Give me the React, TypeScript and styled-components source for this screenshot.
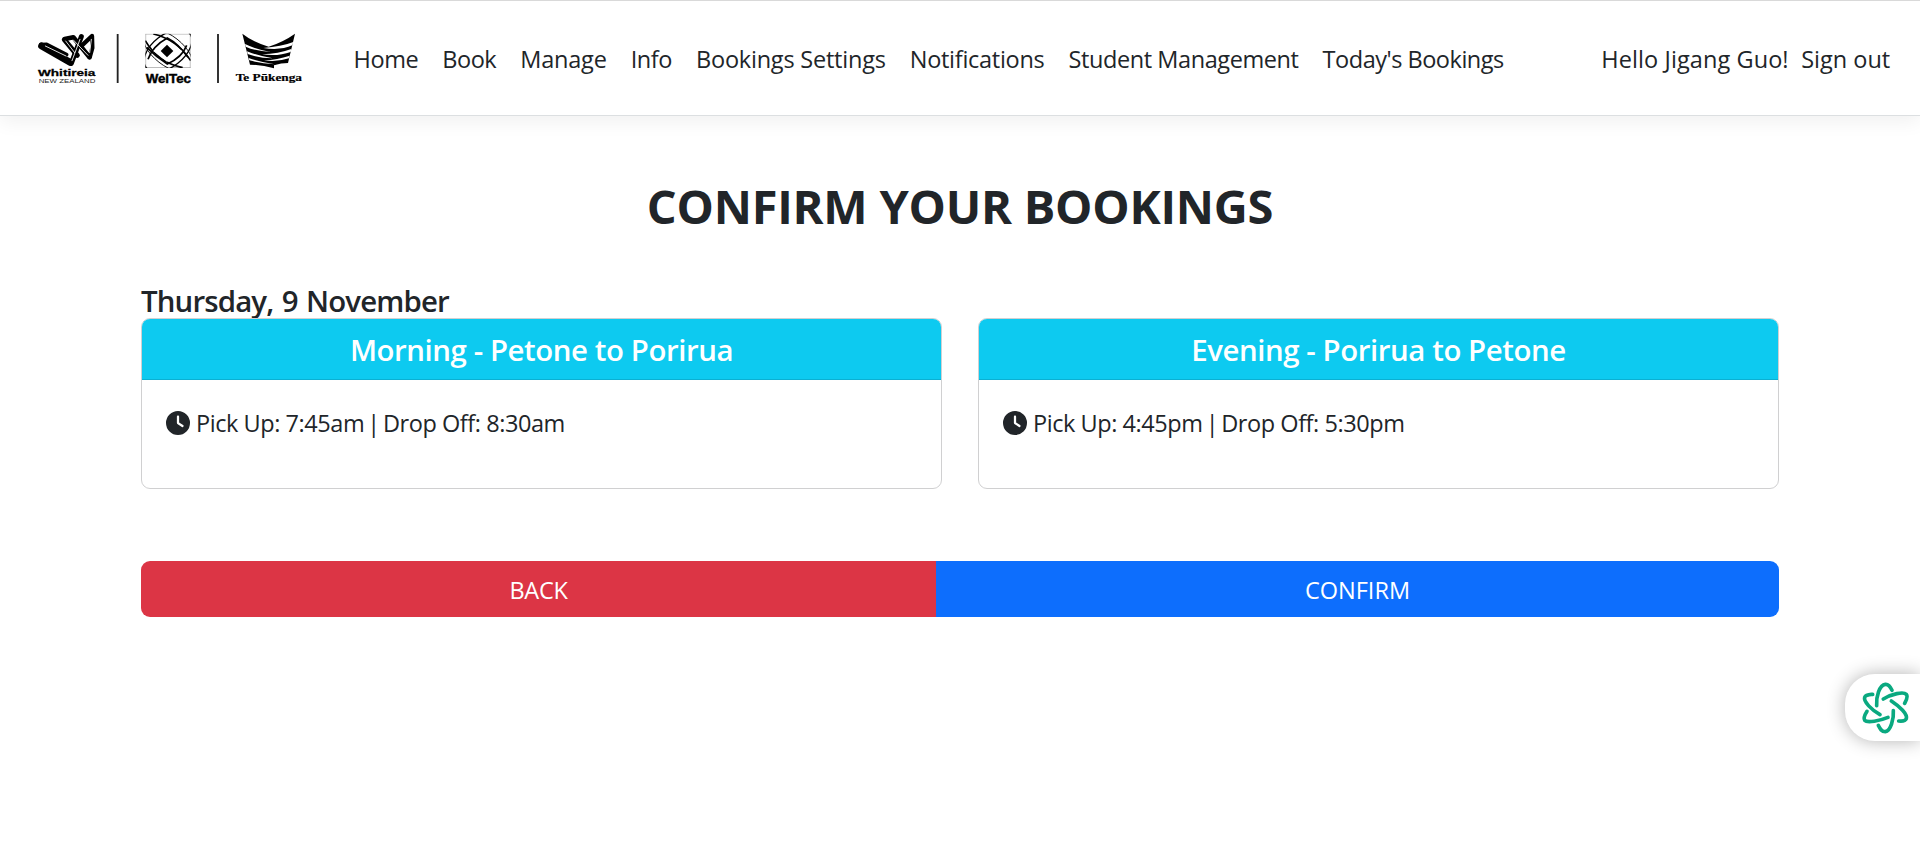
import React from "react";
import styled, { createGlobalStyle } from "styled-components";

const GlobalStyle = createGlobalStyle`
  *, *::before, *::after { box-sizing: border-box; }
  body {
    margin: 0;
    background: #fff;
    color: #212529;
    font-family: "Open Sans", "Noto Sans", sans-serif;
    font-size: 23.5px;
    line-height: 36px;
    overflow: hidden;
  }
  h1, h2, h3, p { margin: 0; }
`;

const Page = styled.div`
  position: relative;
  min-height: 845px;
  overflow: hidden;
`;

const Header = styled.header`
  display: flex;
  align-items: center;
  height: 116px;
  padding: 1px 29.8px 0 20px;
  border-top: 1px solid #d9d9d9;
  border-bottom: 1px solid #dcdfe1;
  box-shadow: 0 6px 18px rgba(0, 0, 0, 0.06);
`;

const Brand = styled.a`
  display: block;
  flex: none;
  width: 300px;
  height: 80px;
  margin-top: 2px;
  svg { display: block; }
`;

const Nav = styled.nav`
  display: flex;
  flex: 1;
  gap: 24.1px;
  margin-left: 33.6px;
`;

const Account = styled.div`
  display: flex;
  gap: 12.5px;
`;

const Label = styled.a<{ $spacing?: number }>`
  color: inherit;
  text-decoration: none;
  white-space: nowrap;
  letter-spacing: ${(p) => p.$spacing ?? 0}px;
`;

const Main = styled.main`
  width: 1638px;
  margin: 0 auto;
  padding-top: 61px;
`;

const Title = styled.h1`
  font-size: 47px;
  font-weight: 700;
  line-height: 58px;
  letter-spacing: -0.23px;
  text-align: center;
`;

const DateHeading = styled.h2`
  height: 36px;
  margin-top: 47px;
  padding-top: 1px;
  font-size: 29.4px;
  font-weight: 600;
  line-height: 36px;
  letter-spacing: -0.85px;
  word-spacing: 1.6px;
`;

const Cards = styled.div`
  display: grid;
  grid-template-columns: 1fr 1fr;
  gap: 36px;
`;

const Card = styled.section`
  border: 1px solid #d0d0d1;
  border-radius: 9px;
  overflow: hidden;
`;

const CardTitle = styled.h3`
  padding: 13px 24px 11px;
  border-bottom: 1px solid #0bb0d2;
  background: #0dcaf0;
  color: #fff;
  font-size: 29.4px;
  font-weight: 600;
  letter-spacing: -0.42px;
  text-align: center;
`;

const CardBody = styled.div`
  display: flex;
  align-items: flex-start;
  gap: 6px;
  height: 108px;
  padding: 25px 24px;
`;

const ClockIcon = styled.svg`
  flex: none;
  width: 24px;
  height: 24px;
  margin-top: 6px;
`;

const Separator = styled.span`
  margin: 0 -2.6px 0 -2.6px;
`;

const Actions = styled.div`
  display: flex;
  margin-top: 72px;
  border-radius: 9px;
  overflow: hidden;
`;

const ActionButton = styled.button<{ $color: string; $width: number; $spacing?: number }>`
  width: ${(p) => p.$width}px;
  height: 56px;
  padding: 11px 0 9px;
  border: 0;
  background: ${(p) => p.$color};
  color: #fff;
  font: inherit;
  letter-spacing: ${(p) => p.$spacing ?? 0}px;
`;

const Assistant = styled.button`
  position: absolute;
  top: 674px;
  right: 0;
  display: flex;
  align-items: center;
  width: 75px;
  height: 67px;
  padding: 0 0 0 15px;
  border: 0;
  border-radius: 30px 0 0 30px;
  background: #fff;
  box-shadow: 0 0 18px rgba(0, 0, 0, 0.3);
`;

const Logos = () => (
  <svg width="300" height="80" viewBox="0 0 900 240">
    {/* Whitireia */}
    <g strokeLinejoin="round" strokeLinecap="round" fill="none">
      <path d="M65 78L150 127" stroke="#000" strokeWidth="21" />
      <path d="M62 74L80 73L140 104" stroke="#000" strokeWidth="11" />
      <path d="M154 130L184 50" stroke="#000" strokeWidth="15" />
      <path d="M133 59L172 106" stroke="#000" strokeWidth="15" />
      <path d="M134 57L160 52L208 111" stroke="#000" strokeWidth="14" />
      <path d="M209 112L217 84L216 48L186 76" stroke="#000" strokeWidth="13" />
      <path d="M76 78L138 108M137 63L164 98M160 60L204 106M180 58L156 122M214 58L209 98" stroke="#fff" strokeWidth="2.6" />
    </g>
    <text x="54" y="168" textLength="172" lengthAdjust="spacingAndGlyphs" fontFamily="Liberation Sans, sans-serif" fontWeight="700" fontSize="29" stroke="#000" strokeWidth="0.8">Whitireia</text>
    <text x="56" y="188" textLength="170" lengthAdjust="spacingAndGlyphs" fontFamily="Liberation Sans, sans-serif" fontSize="18" fill="#222">NEW ZEALAND</text>
    <path d="M293 42V189M594 42V189" stroke="#222" strokeWidth="5.5" />
    {/* WelTec */}
    <clipPath id="weltec"><rect x="376" y="41" width="136" height="103" /></clipPath>
    <g clipPath="url(#weltec)" fill="none" stroke="#000">
      <path d="M376 42H512M376 143H512M377 41V144M511 41V144" stroke="#888" strokeWidth="2" />
      <ellipse cx="444" cy="92" rx="83" ry="48" transform="rotate(-38 444 92)" strokeWidth="4" />
      <ellipse cx="444" cy="92" rx="88" ry="44" transform="rotate(38 444 92)" strokeWidth="2.5" />
      <path d="M400 42Q470 58 512 122M376 62Q414 128 488 143" strokeWidth="5" />
      <path d="M384 118Q398 78 442 54Q474 70 504 112M380 82Q410 112 442 132Q486 112 500 76" strokeWidth="5" />
      <path d="M404 93Q422 82 441 64Q462 82 482 93Q462 104 441 122Q422 104 404 93Z" fill="#fff" stroke="#fff" strokeWidth="5" />
      <path d="M441 74L460 93L441 112L422 93Z" fill="#000" stroke="none" />
    </g>
    <text x="377" y="189" textLength="136" lengthAdjust="spacingAndGlyphs" fontFamily="Liberation Sans, sans-serif" fontWeight="700" fontSize="36" stroke="#000" strokeWidth="1.2">WelTec</text>
    {/* Te Pūkenga */}
    <path d="M667 41Q700 67 746 80Q790 66 825 41L804 129Q784 129 762 136L762 145Q728 134 690 134Z" fill="#000" />
    <g fill="#fff">
      <path d="M675 72Q708 88 752 96Q708 94 677 80Z" />
      <path d="M820 66Q784 80 730 84Q782 92 817 76Z" />
      <path d="M681 94Q716 108 758 115Q714 114 683 102Z" />
      <path d="M814 87Q776 101 726 103Q774 110 812 96Z" />
      <path d="M686 114Q722 126 764 133Q720 130 688 121Z" />
      <path d="M809 107Q772 119 732 121Q770 127 807 115Z" />
    </g>
    <text x="647" y="184" textLength="199" lengthAdjust="spacingAndGlyphs" fontFamily="Liberation Serif, serif" fontWeight="700" fontSize="31" stroke="#000" strokeWidth="0.6">Te Pūkenga</text>
  </svg>
);

const Clock = () => (
  <ClockIcon viewBox="0 0 512 512" fill="#212529">
    <path d="M256 0a256 256 0 1 1 0 512A256 256 0 1 1 256 0zM232 120V256c0 8 4 15.5 10.700 20l96 64c11 7.400 25.900 4.400 33.300-6.700s4.400-25.900-6.700-33.300L280 243.200V120c0-13.300-10.700-24-24-24s-24 10.700-24 24z" />
  </ClockIcon>
);

const Knot = () => (
  <svg width="50" height="56" viewBox="120 90 150 168" fill="none" stroke="#0aa980" strokeWidth="11" strokeLinecap="round">
    <path d="M170 167C168 140 178 105 196 103C206 102 212 112 216 121" />
    <path d="M190 147C215 132 250 124 259 133C265 141 258 153 254 160" />
    <path d="M214 153C240 170 263 193 259 206C256 214 246 214 236 213" />
    <path d="M220 182C222 205 212 243 196 245C184 245 180 236 175 226" />
    <path d="M204 202C180 212 142 220 134 211C130 205 136 192 141 184" />
    <path d="M180 194C155 180 130 155 134 142C137 134 148 134 158 133" />
  </svg>
);

const links = [
  { text: "Home", spacing: -0.45 },
  { text: "Book", spacing: -0.5 },
  { text: "Manage", spacing: -0.2 },
  { text: "Info", spacing: -0.45 },
  { text: "Bookings Settings", spacing: -0.22 },
  { text: "Notifications", spacing: -0.28 },
  { text: "Student Management", spacing: -0.42 },
  { text: "Today's Bookings", spacing: -0.48 },
];

const trips = [
  { title: "Morning - Petone to Porirua", pickUp: "7:45am", dropOff: "8:30am" },
  { title: "Evening - Porirua to Petone", pickUp: "4:45pm", dropOff: "5:30pm" },
];

export default function App() {
  return (
    <Page>
      <GlobalStyle />
      <Header>
        <Brand><Logos /></Brand>
        <Nav>
          {links.map((l) => <Label key={l.text} $spacing={l.spacing}>{l.text}</Label>)}
        </Nav>
        <Account>
          <Label $spacing={0.09}>Hello Jigang Guo!</Label>
          <Label>Sign out</Label>
        </Account>
      </Header>
      <Main>
        <Title>CONFIRM YOUR BOOKINGS</Title>
        <DateHeading>Thursday, 9 November</DateHeading>
        <Cards>
          {trips.map((t) => (
            <Card key={t.title}>
              <CardTitle>{t.title}</CardTitle>
              <CardBody>
                <Clock />
                <Label as="p" $spacing={-0.44}>
                  Pick Up: {t.pickUp} <Separator>|</Separator> Drop Off: {t.dropOff}
                </Label>
              </CardBody>
            </Card>
          ))}
        </Cards>
        <Actions>
          <ActionButton $color="#dc3545" $width={795} $spacing={-0.3}>BACK</ActionButton>
          <ActionButton $color="#0d6efd" $width={843}>CONFIRM</ActionButton>
        </Actions>
      </Main>
      <Assistant><Knot /></Assistant>
    </Page>
  );
}
